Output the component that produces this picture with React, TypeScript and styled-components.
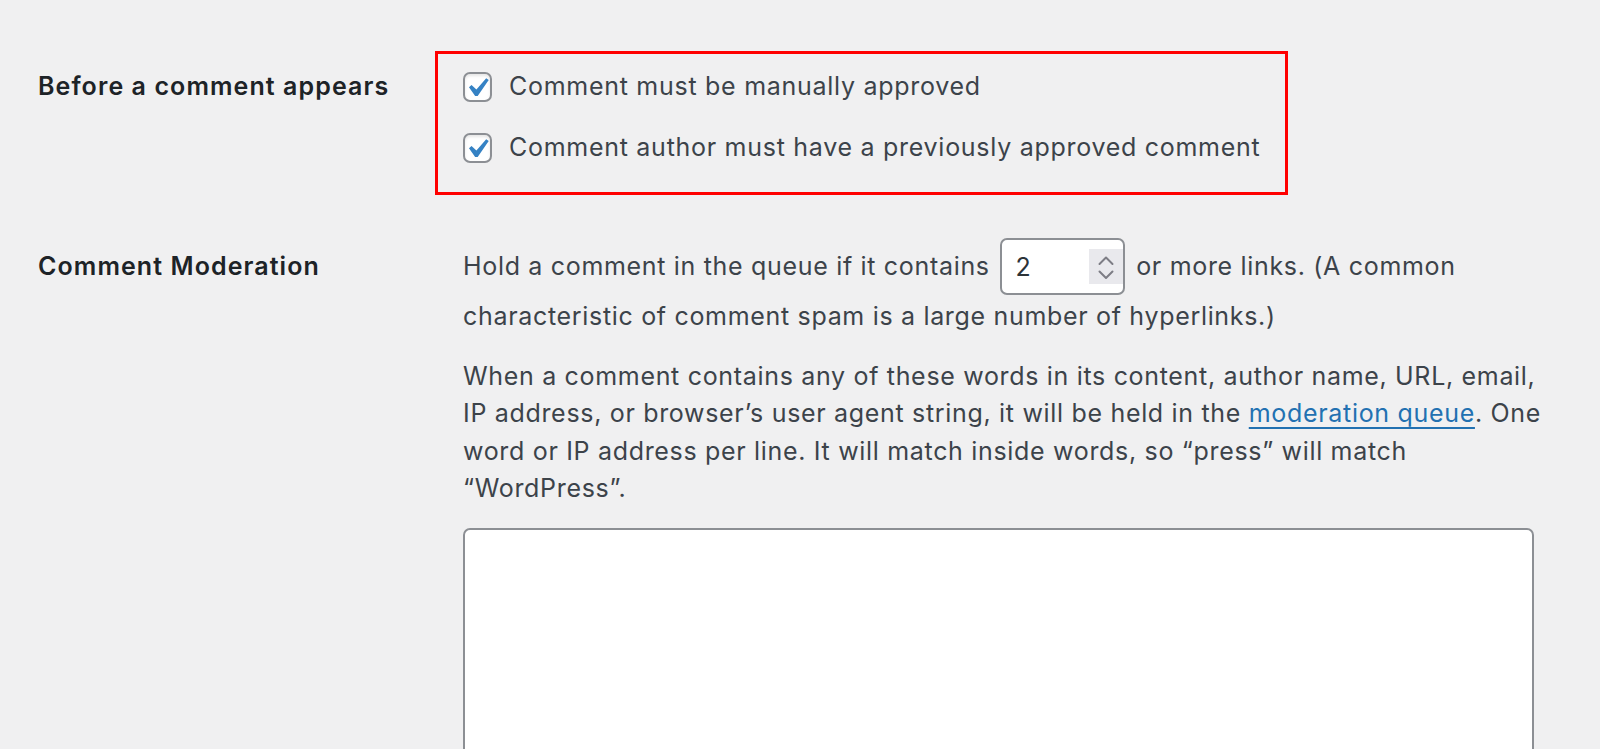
import React from "react";
import styled, { createGlobalStyle } from "styled-components";

const GlobalStyle = createGlobalStyle`
  html, body {
    margin: 0;
    padding: 0;
    background: #f0f0f1;
    overflow: hidden;
  }
  body {
    font-family: Inter, "Noto Sans", "Liberation Sans", sans-serif;
    color: #3c434a;
  }
  * { box-sizing: border-box; }
`;

const Page = styled.div`
  padding: 51px 0 0 38px;
  width: 1600px;
  height: 749px;
`;

const Row = styled.div<{ $top?: number }>`
  display: grid;
  grid-template-columns: 397px 1fr;
  align-items: start;
  margin-top: ${(p) => p.$top ?? 0}px;
`;

const Heading = styled.div<{ $offset: number }>`
  font-size: 25px;
  line-height: 37.5px;
  font-weight: 600;
  letter-spacing: 1.08px;
  color: #1d2327;
  margin-top: ${(p) => p.$offset}px;
  white-space: nowrap;
`;

const Cell = styled.div<{ $indent: number }>`
  padding-left: ${(p) => p.$indent}px;
  font-size: 25px;
  line-height: 37.6px;
  letter-spacing: 0.68px;
`;

const Highlight = styled.fieldset`
  margin: 0;
  width: 852px;
  border: 3px solid #ff0000;
  padding: 18px 25px 29px;
  display: flex;
  flex-direction: column;
  gap: 31px;
`;

const CheckRow = styled.label`
  display: flex;
  align-items: center;
  height: 30px;
  gap: 17px;
  white-space: nowrap;
  letter-spacing: 0.72px;
  color: #3c434a;
`;

const Box = styled.span`
  position: relative;
  flex: none;
  width: 29px;
  height: 30px;
  border: 2px solid #8c8f94;
  border-radius: 7px;
  background: #fff;
  box-shadow: inset 0 2px 3px rgba(0, 0, 0, 0.1);
`;

const Check = styled.svg`
  position: absolute;
  top: -5px;
  left: -7px;
  width: 38px;
  height: 38px;
`;

const Para = styled.p<{ $top: number }>`
  margin: ${(p) => p.$top}px 0 0;
  white-space: nowrap;
`;

const NumberWrap = styled.span`
  position: relative;
  display: inline-block;
  vertical-align: middle;
  margin: 0 3px 3px 3px;
  width: 125px;
  height: 57px;
  letter-spacing: 0;
`;

const NumberInput = styled.input`
  width: 100%;
  height: 100%;
  border: 2px solid #8c8f94;
  border-radius: 7px;
  background: #fff;
  padding: 0 0 0 13px;
  font: inherit;
  font-size: 25px;
  color: #2c3338;
  appearance: textfield;
  -moz-appearance: textfield;
  &::-webkit-inner-spin-button,
  &::-webkit-outer-spin-button {
    -webkit-appearance: none;
    margin: 0;
  }
  &:focus { outline: none; }
`;

const Spinner = styled.svg`
  position: absolute;
  right: 2px;
  top: 11px;
  width: 34px;
  height: 35px;
  background: #e9e9ed;
`;

const Link = styled.a`
  color: #2271b1;
  text-decoration: underline;
  text-underline-offset: 5px;
  text-decoration-thickness: 2px;
`;

const Area = styled.textarea`
  display: block;
  margin-top: 20px;
  width: 1071px;
  height: 320px;
  border: 2px solid #8c8f94;
  border-radius: 7px;
  background: #fff;
  resize: none;
  font: inherit;
  &:focus { outline: none; }
`;

const CheckMark = () => (
  <Check viewBox="0 0 20 20" aria-hidden>
    <path
      d="M14.83 4.89l1.34.94-5.81 8.38H9.02L5.78 9.67l1.34-1.25 2.57 2.4z"
      fill="#3582c4"
    />
  </Check>
);

const Checkbox = ({ label }: { label: string }) => (
  <CheckRow>
    <Box>
      <CheckMark />
    </Box>
    {label}
  </CheckRow>
);

export default function App() {
  return (
    <>
      <GlobalStyle />
      <Page>
        <Row>
          <Heading $offset={17}>Before a comment appears</Heading>
          <Cell $indent={0}>
            <Highlight>
              <Checkbox label="Comment must be manually approved" />
              <Checkbox label="Comment author must have a previously approved comment" />
            </Highlight>
          </Cell>
        </Row>
        <Row $top={43}>
          <Heading $offset={10}>Comment Moderation</Heading>
          <Cell $indent={28}>
            <Para $top={0}>
              Hold a comment in the queue if it contains{" "}
              <NumberWrap>
                <NumberInput type="number" defaultValue={2} />
                <Spinner viewBox="0 0 34 35" aria-hidden>
                  <path d="M10.5 15 L17 8.5 L23.5 15" fill="none" stroke="#7d7d85" strokeWidth="2" strokeLinecap="round" strokeLinejoin="round" />
                  <path d="M10.5 22.5 L17 29 L23.5 22.5" fill="none" stroke="#7d7d85" strokeWidth="2" strokeLinecap="round" strokeLinejoin="round" />
                </Spinner>
              </NumberWrap>{" "}
              or more links. (A common
              <br />
              characteristic of comment spam is a large number of hyperlinks.)
            </Para>
            <Para $top={22}>
              When a comment contains any of these words in its content, author name, URL, email,
              <br />
              IP address, or browser’s user agent string, it will be held in the{" "}
              <Link href="#">moderation queue</Link>. One
              <br />
              word or IP address per line. It will match inside words, so “press” will match
              <br />
              “WordPress”.
            </Para>
            <Area />
          </Cell>
        </Row>
      </Page>
    </>
  );
}
